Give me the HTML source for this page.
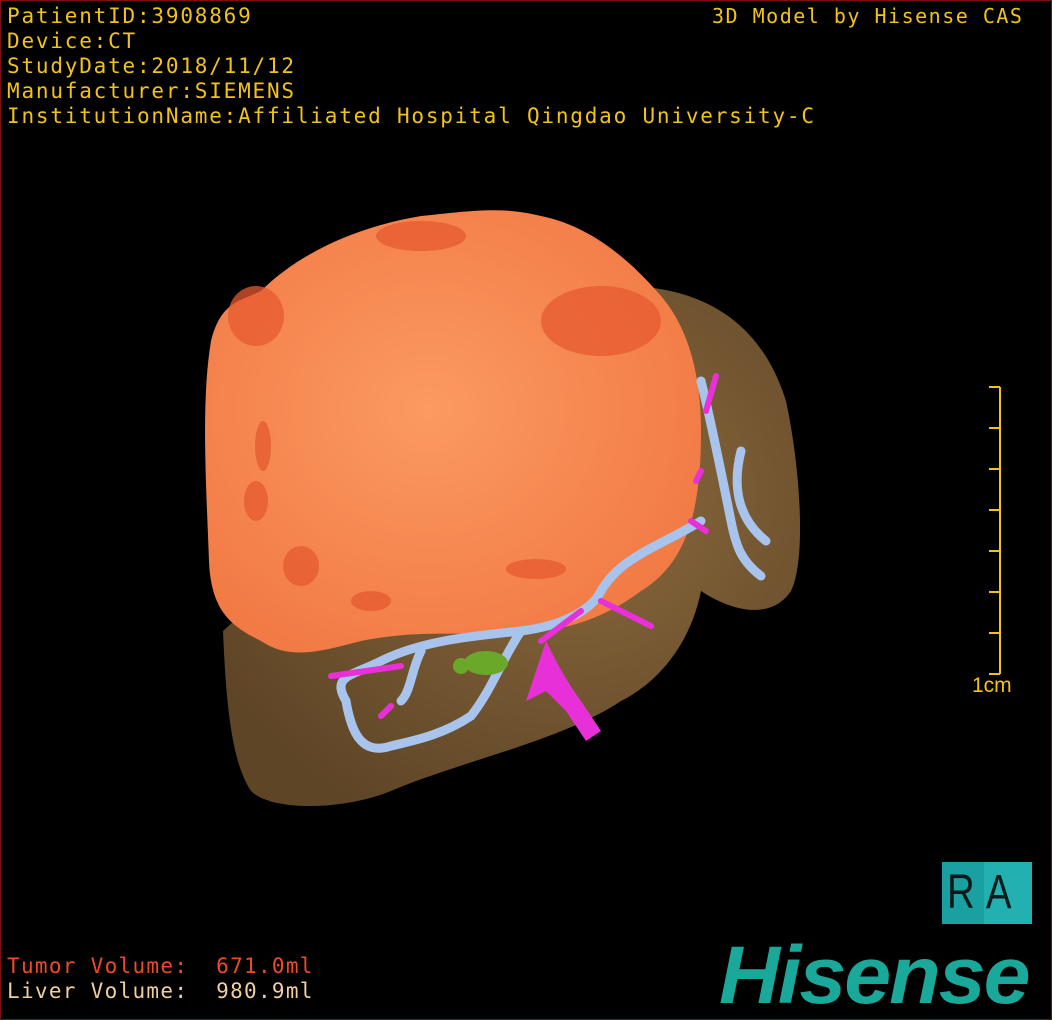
<!DOCTYPE html>
<html><head><meta charset="utf-8"><style>
html,body{margin:0;padding:0;background:#000;}
#f{position:relative;width:1050px;height:1018px;border:1px solid #7a1010;background:#000;overflow:hidden;}
.t{position:absolute;font-family:"DejaVu Sans Mono","Liberation Mono",monospace;color:#f2c21c;font-size:21px;letter-spacing:1.8px;white-space:pre;line-height:25px;}
</style></head><body><div id="f">
<svg width="1050" height="1018" style="position:absolute;left:0;top:0">
<defs>
<radialGradient id="tg" cx="0.45" cy="0.45" r="0.6"><stop offset="0" stop-color="#fb9a62"/><stop offset="1" stop-color="#f27a45"/></radialGradient>
<radialGradient id="lg" cx="0.6" cy="0.4" r="0.7"><stop offset="0" stop-color="#8c6a3e"/><stop offset="1" stop-color="#5e4526"/></radialGradient>
</defs>
<path d="M600 285 C700 280 760 320 785 400 C800 470 805 560 790 590 C770 620 730 610 700 590 C690 640 660 680 620 700 C560 740 460 760 390 790 C340 810 270 810 250 790 C230 760 225 700 222 630 L300 560 Z" fill="url(#lg)"/>
<path d="M260 290 C300 250 360 225 420 215 C470 210 500 205 540 215 C590 225 630 260 660 295 C690 330 700 380 700 430 C700 500 690 560 640 590 C600 620 560 630 520 632 C460 635 420 628 360 640 C320 650 290 660 260 640 C230 625 210 610 208 560 C205 480 200 400 210 340 C220 300 240 300 260 290 Z" fill="url(#tg)"/>
<g fill="#e55a30" opacity="0.75">
<ellipse cx="255" cy="315" rx="28" ry="30"/><ellipse cx="600" cy="320" rx="60" ry="35"/><ellipse cx="420" cy="235" rx="45" ry="15"/>
<ellipse cx="300" cy="565" rx="18" ry="20"/><ellipse cx="535" cy="568" rx="30" ry="10"/><ellipse cx="370" cy="600" rx="20" ry="10"/>
<ellipse cx="262" cy="445" rx="8" ry="25"/><ellipse cx="255" cy="500" rx="12" ry="20"/>
</g>
<g fill="none" stroke="#a8c4ec" stroke-width="9" stroke-linecap="round">
<path d="M700 380 C710 420 720 470 730 520 C735 545 740 560 760 575"/>
<path d="M740 450 C730 490 740 520 765 540"/>
<path d="M700 520 C660 545 620 555 600 590 C590 610 560 625 520 630 C470 635 420 640 380 660 C350 675 330 675 345 700 C350 730 360 755 390 745"/>
<path d="M520 630 C500 660 490 690 470 715 C440 735 410 740 390 745"/>
<path d="M420 650 C410 670 410 690 400 700"/>
</g>
<g fill="none" stroke="#e830d8" stroke-width="6" stroke-linecap="round">
<path d="M715 375 L705 410 M700 470 L695 480 M690 520 L705 530 M600 600 L650 625 M540 640 L580 610"/>
<path d="M330 675 L400 665 M390 705 L380 715"/>
</g>
<path d="M545 640 C555 660 565 680 580 700 L600 730 L585 740 L565 710 L545 690 L525 700 Z" fill="#e830d8"/>
<ellipse cx="485" cy="662" rx="22" ry="12" fill="#6aa82a"/>
<ellipse cx="460" cy="665" rx="8" ry="8" fill="#6aa82a"/>
<g stroke="#f2c21c" stroke-width="2">
<line x1="999" y1="386" x2="999" y2="673"/>
<line x1="988" y1="386" x2="999" y2="386"/><line x1="988" y1="427" x2="999" y2="427"/><line x1="988" y1="468" x2="999" y2="468"/><line x1="988" y1="509" x2="999" y2="509"/><line x1="988" y1="550" x2="999" y2="550"/><line x1="988" y1="591" x2="999" y2="591"/><line x1="988" y1="632" x2="999" y2="632"/><line x1="988" y1="673" x2="999" y2="673"/>
</g>
<rect x="941" y="861" width="90" height="62" fill="#1aa0a0"/>
<rect x="983" y="861" width="48" height="62" fill="#23b0b0"/>
</svg>
<div class="t" style="left:6px;top:3px">PatientID:3908869
Device:CT
StudyDate:2018/11/12
Manufacturer:SIEMENS
InstitutionName:Affiliated Hospital Qingdao University-C</div>
<div class="t" style="left:711px;top:3px;font-size:20px;letter-spacing:1.5px">3D Model by Hisense CAS</div>
<div class="t" style="left:971px;top:672px;font-family:'Liberation Sans',sans-serif;font-size:21px;letter-spacing:0">1cm</div>
<div class="t" style="left:946px;top:863px;color:#0a1a1a;font-family:'Liberation Sans',sans-serif;font-size:48px;line-height:58px;letter-spacing:14px;transform:scaleX(0.8);transform-origin:left">RA</div>
<div class="t" style="left:6px;top:953px;color:#ee4a2a;letter-spacing:1.3px">Tumor Volume:  671.0ml</div>
<div class="t" style="left:6px;top:978px;color:#f0d0a0;letter-spacing:1.3px">Liver Volume:  980.9ml</div>
<div style="position:absolute;left:718px;top:935px;font-family:'Liberation Sans',sans-serif;font-weight:bold;font-style:italic;font-size:82px;line-height:80px;color:#1aa89a;letter-spacing:-2px;transform:scaleX(1.03);transform-origin:left">Hisense</div>
</div></body></html>
